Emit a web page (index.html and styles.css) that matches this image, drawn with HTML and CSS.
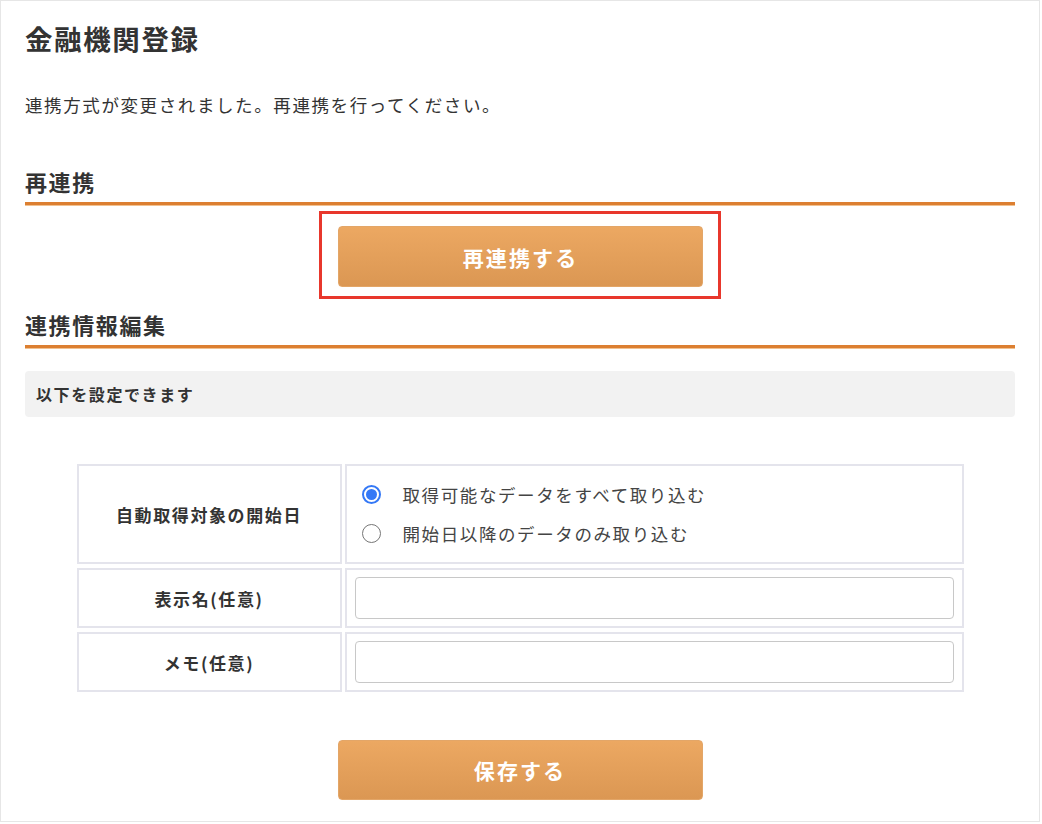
FILE: index.html
```html
<!DOCTYPE html>
<html lang="ja">
<head>
<meta charset="utf-8">
<title>金融機関登録</title>
<link rel="stylesheet" href="styles.css">
</head>
<body>
<div class="frame">
  <h1 class="title">金融機関登録</h1>
  <p class="notice">連携方式が変更されました。再連携を行ってください。</p>

  <h2 class="section">再連携</h2>
  <div class="highlight">
    <button class="btn" type="button">再連携する</button>
  </div>

  <h2 class="section section-second">連携情報編集</h2>
  <div class="info-box">以下を設定できます</div>

  <div class="form-grid">
    <div class="cell label tall">自動取得対象の開始日</div>
    <div class="cell field radios">
      <label class="radio-row"><span class="radio checked"></span><span class="radio-text">取得可能なデータをすべて取り込む</span></label>
      <label class="radio-row"><span class="radio"></span><span class="radio-text">開始日以降のデータのみ取り込む</span></label>
    </div>
    <div class="cell label">表示名(任意)</div>
    <div class="cell field"><input class="text-input" type="text"></div>
    <div class="cell label">メモ(任意)</div>
    <div class="cell field"><input class="text-input" type="text"></div>
  </div>

  <div class="save-wrap">
    <button class="btn" type="button">保存する</button>
  </div>
</div>
</body>
</html>
```

FILE: styles.css
```css
* { box-sizing: border-box; }

html, body {
  margin: 0;
  padding: 0;
  background: #ffffff;
}

body {
  font-family: "Noto Sans CJK JP", "Noto Sans", sans-serif;
  color: #333333;
  letter-spacing: 0.1em;
}

.frame {
  width: 1040px;
  height: 822px;
  border: 1px solid #e6e6e6;
  padding: 0 24px;
}

.title {
  margin: 17px 0 0;
  font-size: 27.5px;
  line-height: 40px;
  font-weight: 700;
  color: #333;
}

.notice {
  margin: 35px 0 0;
  font-size: 17.5px;
  line-height: 24px;
  color: #333;
}

.section {
  margin: 49px 0 0;
  font-size: 22px;
  line-height: 30px;
  font-weight: 700;
  color: #333;
  padding-bottom: 6px;
  border-bottom: 3px solid #dc7f31;
  box-shadow: 0 1px 0 #f1c190;
}

.section-second {
  margin-top: 10px;
}

.highlight {
  width: 402px;
  margin: 6px auto 0;
  border: 3px solid #e8372c;
  padding: 12px 16px 9px;
}

.btn {
  display: block;
  width: 365px;
  height: 61px;
  margin: 0;
  border: 1px solid #e3a668;
  border-radius: 4px;
  background: linear-gradient(#eca862, #db9753);
  color: #ffffff;
  font-family: "Noto Sans CJK JP", "Noto Sans", sans-serif;
  font-size: 21px;
  font-weight: 700;
  letter-spacing: 0.1em;
  cursor: pointer;
}

.info-box {
  margin-top: 23px;
  height: 46px;
  line-height: 46px;
  padding: 0 11px;
  background: #f2f2f2;
  border-radius: 4px;
  font-size: 16px;
  font-weight: 700;
  color: #333;
}

.form-grid {
  width: 887px;
  margin: 47px auto 0;
  display: grid;
  grid-template-columns: 265px 1fr;
  grid-template-rows: 100px 60px 60px;
  gap: 4px 3px;
}

.cell {
  border: 2px solid #e4e4ec;
}

.label {
  display: flex;
  align-items: center;
  justify-content: center;
  font-size: 17px;
  font-weight: 700;
  color: #333;
}

.field {
  display: flex;
  align-items: center;
  padding: 0 8px;
}

.radios {
  flex-direction: column;
  align-items: flex-start;
  justify-content: center;
  gap: 11px;
  padding-left: 15px;
}

.radio-row {
  display: flex;
  align-items: center;
  height: 28px;
}

.radio {
  width: 19px;
  height: 19px;
  border-radius: 50%;
  border: 1.5px solid #767676;
  background: #fff;
  margin-right: 22px;
  position: relative;
}

.radio.checked {
  border: 2px solid #3478f6;
}

.radio.checked::after {
  content: "";
  position: absolute;
  left: 2px;
  top: 2px;
  width: 11px;
  height: 11px;
  border-radius: 50%;
  background: #3478f6;
}

.radio-text {
  font-size: 17.5px;
  color: #444;
}

.text-input {
  width: 100%;
  height: 42px;
  border: 1px solid #c8c8c8;
  border-radius: 4px;
  background: #fff;
  font-size: 16px;
  padding: 0 10px;
}

.save-wrap {
  display: flex;
  justify-content: center;
  margin-top: 48px;
}

.save-wrap .btn {
  height: 60px;
}
```
